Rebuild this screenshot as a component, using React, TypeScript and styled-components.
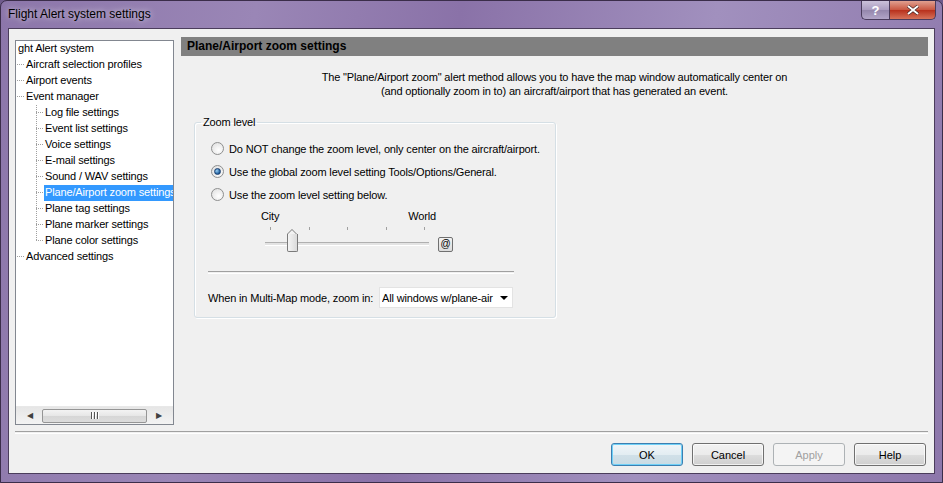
import React from "react";
import styled, { createGlobalStyle, css } from "styled-components";

const GlobalStyle = createGlobalStyle`
  html, body {
    margin: 0;
    padding: 0;
    background: #6f5a8c;
  }
  body {
    font-family: "Liberation Sans", Arial, sans-serif;
    font-size: 11px;
    letter-spacing: -0.15px;
    color: #000;
  }
`;

const Window = styled.div`
  width: 943px;
  height: 483px;
  box-sizing: border-box;
  display: flex;
  flex-direction: column;
  border: 1px solid #3b2d4a;
  border-radius: 7px 7px 0 0;
  background: linear-gradient(
    100deg,
    #8c76aa 0%,
    #9a86b6 25%,
    #8a72a8 45%,
    #a190be 70%,
    #8d77ab 100%
  );
  overflow: hidden;
`;

const TitleBar = styled.div`
  height: 27px;
  display: flex;
  justify-content: space-between;
  align-items: flex-start;
  padding-left: 7px;
`;

const Title = styled.div`
  font-size: 12px;
  letter-spacing: 0;
  line-height: 27px;
  color: #000;
  text-shadow: 0 0 6px rgba(255, 255, 255, 0.8);
`;

const CaptionButtons = styled.div`
  display: flex;
  margin-right: 6px;
`;

const CaptionButton = styled.div<{ close?: boolean }>`
  height: 19px;
  display: flex;
  align-items: center;
  justify-content: center;
  box-sizing: border-box;
  border: 1px solid #4a3c5c;
  border-top: none;
  color: #fff;
  font-weight: bold;
  font-size: 13px;
  ${(p) =>
    p.close
      ? css`
          width: 47px;
          border-radius: 0 0 5px 0;
          background: linear-gradient(#e0a090, #c8553f 50%, #b8301c 51%, #d6725a);
        `
      : css`
          width: 28px;
          border-right: none;
          border-radius: 0 0 0 5px;
          background: linear-gradient(#cbc1da, #aa9cc0 50%, #9486ac 51%, #b2a5c8);
        `}
`;

const Client = styled.div`
  flex: 1;
  margin: 0 7px 8px 7px;
  border: 1px solid #4b3d5c;
  background: #f0f0f0;
  display: flex;
  flex-direction: column;
`;

const Main = styled.div`
  flex: 1;
  display: flex;
  padding: 8px 6px 0 6px;
`;

const TreePanel = styled.div`
  width: 159px;
  height: 385px;
  margin-top: 3px;
  box-sizing: border-box;
  border: 1px solid #828790;
  background: #fff;
  display: flex;
  flex-direction: column;
  overflow: hidden;
`;

const TreeList = styled.div`
  flex: 1;
`;

const Dotted = css`
  background-image: linear-gradient(to right, #a0a0a0 50%, transparent 50%);
  background-size: 2px 1px;
  background-repeat: repeat-x;
`;

const TreeRow = styled.div<{ level: number }>`
  height: 16px;
  display: flex;
  align-items: flex-start;
  padding-left: ${(p) => 1 + p.level * 19}px;
  white-space: nowrap;
`;

const Connector = styled.span`
  width: 7px;
  height: 1px;
  margin: 7px 1px 0 0;
  flex-shrink: 0;
  ${Dotted}
`;

const ChildGroup = styled.div`
  position: relative;
  &::before {
    content: "";
    position: absolute;
    left: 20px;
    top: 0;
    bottom: 9px;
    width: 1px;
    background-image: linear-gradient(to bottom, #a0a0a0 50%, transparent 50%);
    background-size: 1px 2px;
  }
`;

const TreeLabel = styled.span<{ selected?: boolean }>`
  padding: 0 1px 2px 1px;
  line-height: 14px;
  ${(p) =>
    p.selected &&
    css`
      background: #3399ff;
      color: #fff;
    `}
`;

const HScroll = styled.div`
  height: 17px;
  display: flex;
  align-items: center;
  background: linear-gradient(to bottom, #e6e6e6, #f3f3f3);
  border-top: 1px solid #e8e8e8;
`;

const ScrollArrow = styled.div`
  width: 28px;
  display: flex;
  justify-content: center;
  font-size: 8px;
  color: #404040;
`;

const ScrollThumb = styled.div`
  flex: 1;
  height: 14px;
  margin: 0 -2px;
  box-sizing: border-box;
  border: 1px solid #959595;
  border-radius: 2px;
  background: linear-gradient(to bottom, #f3f3f3, #e6e6e6 50%, #d6d6d6 51%, #dcdcdc);
  display: flex;
  align-items: center;
  justify-content: center;
  gap: 1px;
`;

const Grip = styled.span`
  width: 1px;
  height: 7px;
  background: #555;
  border-right: 1px solid #fff;
`;

const Content = styled.div`
  flex: 1;
  margin-left: 7px;
  display: flex;
  flex-direction: column;
  align-items: flex-start;
`;

const Header = styled.div`
  align-self: stretch;
  height: 19px;
  background: #808080;
  padding-left: 6px;
  font-weight: bold;
  font-size: 12px;
  letter-spacing: 0;
  line-height: 19px;
`;

const Description = styled.div`
  align-self: stretch;
  text-align: center;
  margin-top: 14px;
  line-height: 14px;
`;

const GroupBox = styled.fieldset`
  margin: 18px 0 0 13px;
  padding: 0;
  width: 362px;
  height: 202px;
  box-sizing: border-box;
  border: 1px solid #d5dfe5;
  border-radius: 3px;
  box-shadow: inset 1px 1px 0 #fff, 1px 1px 0 #fff;
`;

const Legend = styled.legend`
  margin-left: 6px;
  padding: 0 2px;
  line-height: 13px;
`;

const GroupBody = styled.div`
  padding: 8px 14px 0 16px;
  display: flex;
  flex-direction: column;
`;

const RadioRow = styled.div`
  height: 23px;
  display: flex;
  align-items: center;
  gap: 5px;
  white-space: nowrap;
`;

const RadioCircle = styled.span<{ checked?: boolean }>`
  width: 13px;
  height: 13px;
  flex-shrink: 0;
  box-sizing: border-box;
  border-radius: 50%;
  border: 1px solid #8e8f8f;
  background: radial-gradient(circle at 60% 65%, #ffffff, #dcdcdc);
  display: flex;
  align-items: center;
  justify-content: center;
  &::after {
    content: "";
    display: ${(p) => (p.checked ? "block" : "none")};
    width: 5px;
    height: 5px;
    border-radius: 50%;
    background: radial-gradient(circle at 35% 35%, #9ad0f5, #1c5a99 70%);
    border: 1px solid #1a3e6e;
  }
`;

const SliderBlock = styled.div`
  margin: 4px 0 0 53px;
  width: 200px;
  display: flex;
  flex-direction: column;
`;

const SliderLabels = styled.div`
  display: flex;
  justify-content: space-between;
  width: 175px;
  margin-left: -3px;
  line-height: 13px;
`;

const Ticks = styled.div`
  display: flex;
  justify-content: space-between;
  width: 155px;
  margin: 4px 0 0 6px;
  height: 4px;
`;

const Tick = styled.span`
  width: 1px;
  height: 3px;
  background: #a0a0a0;
`;

const TrackRow = styled.div`
  display: flex;
  align-items: center;
  height: 20px;
  margin-top: 3px;
`;

const Track = styled.div`
  position: relative;
  width: 164px;
  height: 2px;
  margin-left: 1px;
  border-top: 1px solid #b0b0b0;
  border-bottom: 1px solid #ffffff;
  background: #e3e3e3;
`;

const Thumb = styled.div`
  position: absolute;
  left: 22px;
  top: -9px;
  width: 11px;
  height: 18px;
  box-sizing: border-box;
  border: 1px solid #7a7a7a;
  border-top: none;
  border-radius: 0 0 2px 2px;
  background: linear-gradient(to right, #f4f4f4, #dadada);
  &::before {
    content: "";
    position: absolute;
    left: -1px;
    top: -5px;
    width: 0;
    height: 0;
    border-left: 5.5px solid transparent;
    border-right: 5.5px solid transparent;
    border-bottom: 5px solid #7a7a7a;
  }
  &::after {
    content: "";
    position: absolute;
    left: 0px;
    top: -4px;
    width: 0;
    height: 0;
    border-left: 4.5px solid transparent;
    border-right: 4.5px solid transparent;
    border-bottom: 4px solid #f2f2f2;
  }
`;

const AtButton = styled.div`
  width: 15px;
  height: 15px;
  margin-left: 9px;
  box-sizing: border-box;
  border: 1px solid #707070;
  border-radius: 2px;
  background: linear-gradient(#f2f2f2, #dcdcdc);
  display: flex;
  align-items: center;
  justify-content: center;
  font-size: 10px;
  line-height: 1;
`;

const Etched = styled.div`
  height: 1px;
  border-top: 1px solid #a0a0a0;
  border-bottom: 1px solid #ffffff;
`;

const GroupSeparator = styled(Etched)`
  margin: 17px 27px 0 -3px;
`;

const MultiMapRow = styled.div`
  display: flex;
  align-items: center;
  justify-content: space-between;
  margin: 13px 28px 0 -3px;
`;

const Combo = styled.div`
  width: 134px;
  height: 21px;
  box-sizing: border-box;
  border: 1px solid #e3e3e3;
  background: #fff;
  display: flex;
  align-items: center;
  padding-left: 2px;
  white-space: nowrap;
  overflow: hidden;
`;

const ComboText = styled.span`
  flex: 1;
  overflow: hidden;
`;

const ComboArrow = styled.span`
  width: 16px;
  display: flex;
  justify-content: center;
  &::after {
    content: "";
    border-left: 4px solid transparent;
    border-right: 4px solid transparent;
    border-top: 4px solid #000;
  }
`;

const BottomSeparator = styled(Etched)`
  margin: 0 6px 0 6px;
`;

const ButtonRow = styled.div`
  display: flex;
  justify-content: flex-end;
  gap: 9px;
  padding: 9px 8px 7px 0;
`;

const DialogButton = styled.div<{ variant?: "default" | "disabled" }>`
  width: 72px;
  height: 23px;
  box-sizing: border-box;
  border-radius: 3px;
  display: flex;
  align-items: center;
  justify-content: center;
  font-size: 11px;
  letter-spacing: 0;
  border: 1px solid #707070;
  background: linear-gradient(#f2f2f2 0%, #ebebeb 50%, #dddddd 51%, #cfcfcf 100%);
  box-shadow: inset 0 0 0 1px rgba(255, 255, 255, 0.7);
  ${(p) =>
    p.variant === "default" &&
    css`
      border-color: #3c7fb1;
      box-shadow: inset 0 0 0 1px #6fd0f7;
      background: linear-gradient(#f0f5f8 0%, #e3edf2 50%, #d1e0e8 51%, #c9dbe4 100%);
    `}
  ${(p) =>
    p.variant === "disabled" &&
    css`
      border-color: #adb2b5;
      background: #f4f4f4;
      color: #a0a0a0;
      box-shadow: none;
    `}
`;

type TreeItem = { label: string; selected?: boolean };

const topItems: TreeItem[] = [
  { label: "Aircraft selection profiles" },
  { label: "Airport events" },
  { label: "Event manager" },
];

const eventChildren: TreeItem[] = [
  { label: "Log file settings" },
  { label: "Event list settings" },
  { label: "Voice settings" },
  { label: "E-mail settings" },
  { label: "Sound / WAV settings" },
  { label: "Plane/Airport zoom settings", selected: true },
  { label: "Plane tag settings" },
  { label: "Plane marker settings" },
  { label: "Plane color settings" },
];

const radios = [
  { label: "Do NOT change the zoom level, only center on the aircraft/airport.", checked: false },
  { label: "Use the global zoom level setting Tools/Options/General.", checked: true },
  { label: "Use the zoom level setting below.", checked: false },
];

export default function App() {
  return (
    <>
      <GlobalStyle />
      <Window>
        <TitleBar>
          <Title>Flight Alert system settings</Title>
          <CaptionButtons>
            <CaptionButton>?</CaptionButton>
            <CaptionButton close>
              <svg width="12" height="10" viewBox="0 0 12 10">
                <path d="M1 1 L11 9 M11 1 L1 9" stroke="#3a2020" strokeWidth="3.2" />
                <path d="M1 1 L11 9 M11 1 L1 9" stroke="#fff" strokeWidth="2" />
              </svg>
            </CaptionButton>
          </CaptionButtons>
        </TitleBar>
        <Client>
          <Main>
            <TreePanel>
              <TreeList>
                <TreeRow level={0}>
                  <TreeLabel>ght Alert system</TreeLabel>
                </TreeRow>
                {topItems.map((item) => (
                  <TreeRow level={0} key={item.label}>
                    <Connector />
                    <TreeLabel>{item.label}</TreeLabel>
                  </TreeRow>
                ))}
                <ChildGroup>
                  {eventChildren.map((item) => (
                    <TreeRow level={1} key={item.label}>
                      <Connector />
                      <TreeLabel selected={item.selected}>{item.label}</TreeLabel>
                    </TreeRow>
                  ))}
                </ChildGroup>
                <TreeRow level={0}>
                  <Connector />
                  <TreeLabel>Advanced settings</TreeLabel>
                </TreeRow>
              </TreeList>
              <HScroll>
                <ScrollArrow>◀</ScrollArrow>
                <ScrollThumb>
                  <Grip />
                  <Grip />
                  <Grip />
                </ScrollThumb>
                <ScrollArrow>▶</ScrollArrow>
              </HScroll>
            </TreePanel>
            <Content>
              <Header>Plane/Airport zoom settings</Header>
              <Description>
                The "Plane/Airport zoom" alert method allows you to have the map window automatically center on
                <br />
                (and optionally zoom in to) an aircraft/airport that has generated an event.
              </Description>
              <GroupBox>
                <Legend>Zoom level</Legend>
                <GroupBody>
                  {radios.map((r) => (
                    <RadioRow key={r.label}>
                      <RadioCircle checked={r.checked} />
                      <span>{r.label}</span>
                    </RadioRow>
                  ))}
                  <SliderBlock>
                    <SliderLabels>
                      <span>City</span>
                      <span>World</span>
                    </SliderLabels>
                    <Ticks>
                      {[0, 1, 2, 3, 4].map((i) => (
                        <Tick key={i} />
                      ))}
                    </Ticks>
                    <TrackRow>
                      <Track>
                        <Thumb />
                      </Track>
                      <AtButton>@</AtButton>
                    </TrackRow>
                  </SliderBlock>
                  <GroupSeparator />
                  <MultiMapRow>
                    <span>When in Multi-Map mode, zoom in:</span>
                    <Combo>
                      <ComboText>All windows w/plane-air</ComboText>
                      <ComboArrow />
                    </Combo>
                  </MultiMapRow>
                </GroupBody>
              </GroupBox>
            </Content>
          </Main>
          <BottomSeparator />
          <ButtonRow>
            <DialogButton variant="default">OK</DialogButton>
            <DialogButton>Cancel</DialogButton>
            <DialogButton variant="disabled">Apply</DialogButton>
            <DialogButton>Help</DialogButton>
          </ButtonRow>
        </Client>
      </Window>
    </>
  );
}
